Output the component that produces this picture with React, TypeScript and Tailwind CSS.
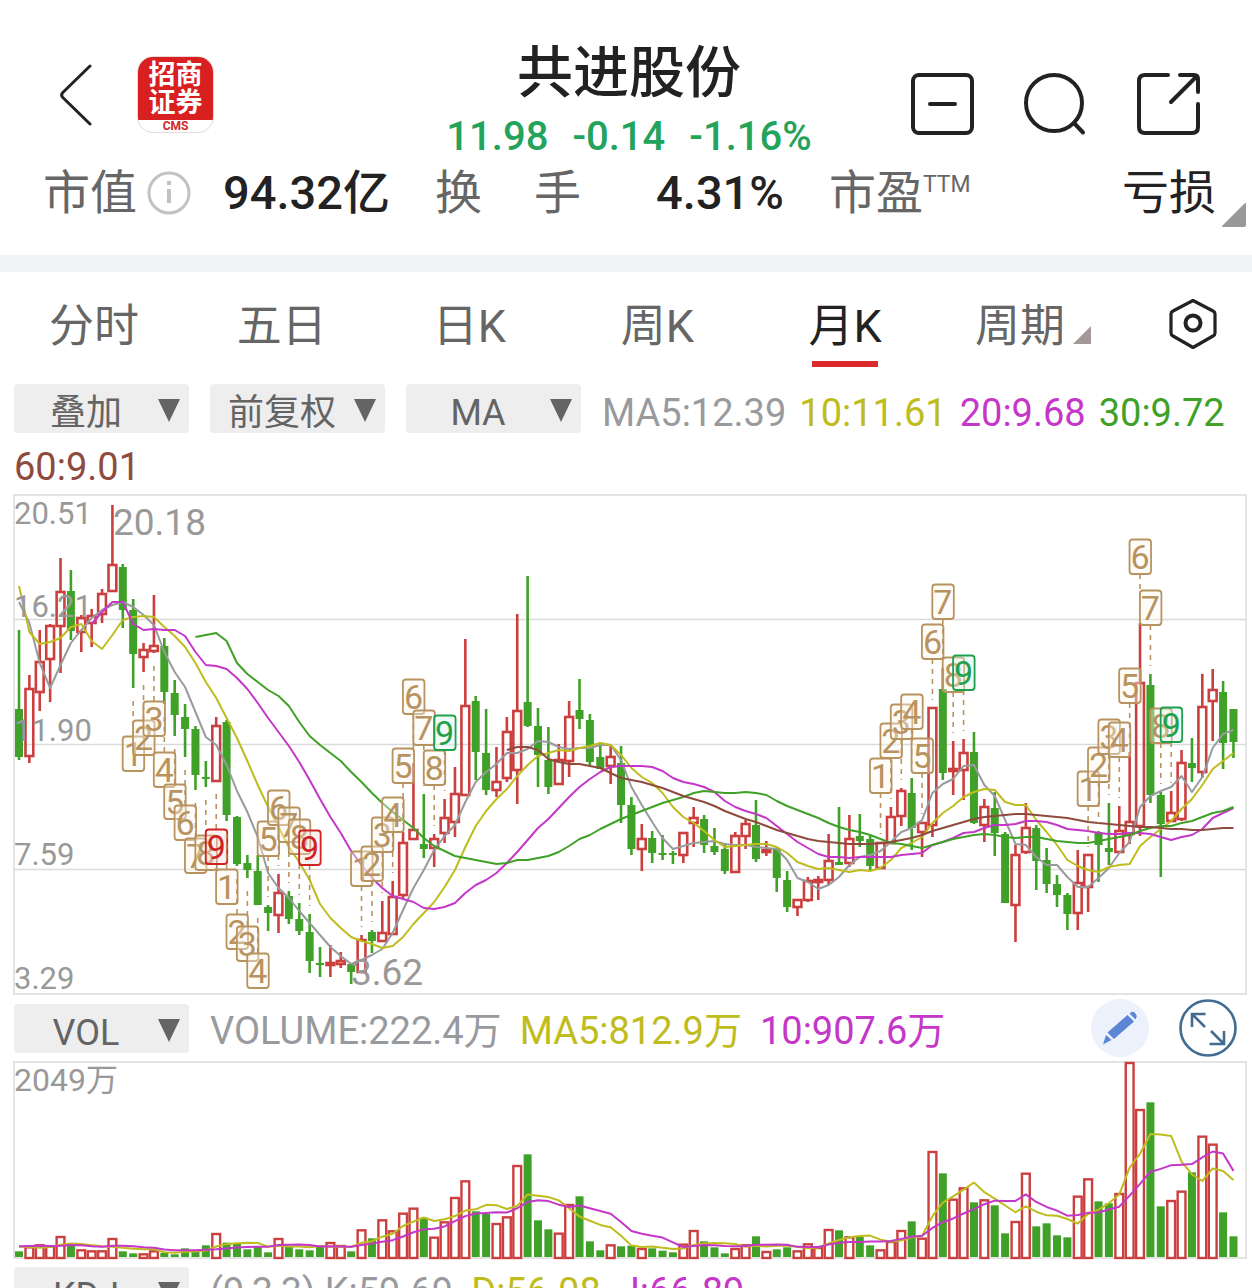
import React from "react";

type Candle = [up: 0 | 1, high: number, low: number, top: number, bottom: number];

const RED = "#cc3f3f";
const GREEN = "#3fa127";
const GRAY = "#999a9e";
const YELLOW = "#bfbc1e";
const MAGENTA = "#c437c9";
const BROWN = "#8f4a3e";
const TAN = "#b8935f";

const FIRST_X = 19;
const STEP = 10.38;
const xAt = (i: number) => FIRST_X + STEP * i;

const candles: Candle[] = [
  [0, 630, 760, 709, 757], [1, 675, 763, 689, 756], [1, 630, 711, 662, 692], [1, 624, 702, 626, 659],
  [1, 558, 673, 592, 626], [0, 570, 640, 591, 631], [1, 615, 652, 618, 632], [1, 609, 647, 616, 623],
  [1, 589, 623, 594, 614], [1, 505, 592, 565, 591], [0, 564, 628, 567, 610], [0, 599, 688, 610, 654],
  [1, 643, 672, 650, 657], [1, 595, 653, 646, 651], [0, 638, 704, 646, 692], [0, 680, 736, 693, 715],
  [0, 704, 757, 717, 729], [0, 726, 790, 729, 775], [0, 761, 787, 777, 779], [1, 717, 781, 726, 781],
  [0, 720, 821, 722, 815], [0, 816, 866, 817, 864], [0, 855, 878, 863, 870], [0, 855, 905, 871, 905],
  [0, 905, 931, 907, 913], [1, 874, 933, 893, 915], [0, 891, 924, 896, 919], [0, 903, 935, 919, 931],
  [0, 914, 973, 932, 961], [0, 947, 977, 963, 965], [1, 945, 977, 963, 965], [1, 952, 968, 961, 964],
  [0, 963, 984, 964, 972], [1, 935, 973, 940, 972], [0, 930, 953, 932, 941], [1, 901, 941, 933, 941],
  [1, 881, 934, 897, 934], [1, 832, 898, 843, 895], [1, 763, 839, 830, 839], [0, 794, 858, 844, 849],
  [1, 834, 867, 839, 848], [1, 799, 843, 818, 833], [1, 767, 837, 794, 822], [1, 639, 795, 706, 795],
  [0, 696, 780, 701, 752], [0, 709, 795, 753, 790], [1, 747, 797, 782, 790], [1, 717, 782, 732, 778],
  [1, 614, 804, 711, 770], [0, 576, 727, 702, 726], [0, 708, 787, 726, 755], [0, 727, 794, 760, 787],
  [1, 744, 784, 760, 784], [1, 701, 777, 717, 761], [0, 679, 729, 710, 719], [0, 714, 765, 720, 762],
  [0, 742, 769, 757, 769], [1, 745, 784, 757, 766], [0, 746, 823, 763, 805], [0, 797, 855, 805, 849],
  [1, 824, 871, 839, 849], [0, 831, 863, 838, 853], [0, 835, 860, 853, 854], [0, 851, 864, 853, 855],
  [1, 832, 863, 833, 855], [1, 807, 847, 818, 823], [0, 815, 853, 819, 845], [0, 828, 855, 846, 852],
  [0, 843, 874, 849, 871], [1, 832, 872, 836, 872], [1, 820, 849, 824, 836], [0, 800, 862, 825, 859],
  [1, 841, 856, 850, 851], [0, 847, 892, 849, 878], [0, 871, 912, 880, 907], [1, 900, 916, 900, 907],
  [1, 877, 902, 881, 900], [1, 876, 900, 880, 882], [1, 834, 885, 861, 880], [0, 807, 865, 862, 865],
  [1, 815, 867, 839, 863], [0, 814, 847, 836, 841], [0, 836, 871, 839, 866], [1, 842, 868, 843, 868],
  [1, 807, 843, 817, 843], [1, 788, 826, 791, 816], [0, 778, 850, 793, 828], [1, 822, 857, 823, 832],
  [1, 708, 837, 708, 825], [0, 668, 780, 689, 773], [1, 741, 795, 769, 771], [1, 739, 800, 753, 770],
  [0, 732, 824, 752, 823], [1, 799, 842, 807, 825], [0, 792, 856, 808, 833], [0, 832, 903, 834, 903],
  [1, 845, 942, 855, 905], [1, 803, 854, 828, 852], [0, 825, 890, 828, 861], [0, 848, 893, 860, 884],
  [0, 875, 907, 884, 895], [0, 893, 930, 895, 914], [1, 850, 930, 883, 913], [1, 855, 912, 855, 887],
  [0, 831, 882, 832, 845], [0, 803, 865, 848, 852], [1, 806, 852, 831, 852], [1, 752, 844, 822, 834],
  [1, 623, 836, 683, 826], [0, 674, 803, 685, 795], [0, 792, 877, 795, 824], [1, 791, 822, 813, 821],
  [1, 750, 821, 763, 819], [0, 738, 782, 763, 768], [1, 674, 778, 707, 772], [1, 669, 741, 690, 701],
  [0, 681, 769, 692, 743], [0, 709, 758, 709, 742],
];

const averages: { color: string; start: number; points: number[] }[] = [
  {
    color: GRAY,
    start: 0,
    points: [
      602, 623, 663, 688, 665, 643, 630, 618, 610, 605, 602, 607, 615, 625, 652, 672, 687, 712, 737, 745, 765, 791,
      812, 837, 873, 888, 898, 911, 923, 935, 947, 956, 964, 960, 955, 949, 933, 910, 888, 870, 850, 836, 825, 802,
      782, 772, 764, 753, 753, 749, 741, 742, 747, 749, 748, 748, 745, 745, 760, 787, 805, 822, 838, 849, 846, 843,
      842, 841, 844, 845, 845, 847, 848, 849, 860, 878, 882, 889, 885, 877, 865, 857, 855, 851, 842, 832, 828, 820,
      793, 784, 779, 766, 765, 785, 796, 820, 844, 845, 857, 865, 865, 877, 887, 887, 878, 868, 853, 842, 807, 796,
      791, 787, 776, 792, 777, 748, 734, 730,
    ],
  },
  {
    color: YELLOW,
    start: 0,
    points: [
      586, 632, 644, 642, 638, 627, 624, 641, 649, 635, 620, 617, 616, 617, 627, 636, 647, 663, 682, 698, 718, 738,
      761, 785, 807, 827, 847, 862, 880, 904, 918, 928, 937, 941, 944, 948, 946, 937, 924, 913, 902, 887, 870, 847,
      826, 811, 799, 789, 776, 765, 756, 753, 750, 751, 748, 746, 743, 745, 755, 768, 777, 783, 793, 807, 817, 823,
      831, 840, 847, 846, 845, 844, 844, 847, 853, 862, 866, 869, 868, 870, 872, 870, 871, 868, 860, 848, 843, 837,
      823, 813, 806, 797, 792, 789, 790, 802, 805, 805, 820, 832, 845, 860, 866, 870, 872, 867, 865, 864, 846, 837,
      829, 821, 809, 799, 785, 769, 761, 753,
    ],
  },
  {
    color: MAGENTA,
    start: 7,
    points: [
      624, 612, 602, 602, 624, 630, 629, 630, 630, 636, 652, 665, 666, 669, 678, 689, 703, 718, 732, 746, 762, 780,
      799, 817, 833, 851, 865, 878, 888, 896, 899, 902, 908, 909, 907, 903, 893, 885, 880, 873, 863, 852, 840, 828,
      819, 808, 797, 787, 779, 772, 767, 766, 766, 766, 767, 771, 778, 782, 784, 787, 792, 801, 807, 811, 814, 818,
      826, 834, 842, 848, 854, 857, 857, 858, 857, 857, 857, 857, 855, 854, 853, 845, 842, 838, 833, 832, 828, 825,
      825, 824, 821, 821, 822, 825, 829, 830, 831, 833, 834, 834, 833, 833, 834, 837, 840, 837, 835, 829, 818, 813,
      808,
    ],
  },
  {
    color: GREEN,
    start: 17,
    points: [
      637, 635, 633, 641, 663, 674, 682, 690, 696, 706, 722, 736, 745, 753, 761, 772, 782, 793, 803, 812, 820, 828,
      838, 846, 851, 856, 858, 860, 862, 864, 863, 860, 860, 858, 856, 852, 846, 839, 835, 829, 824, 819, 815, 811,
      807, 803, 800, 797, 793, 791, 792, 793, 793, 792, 793, 795, 801, 806, 810, 814, 818, 823, 827, 830, 832, 835,
      839, 843, 844, 846, 848, 845, 842, 839, 837, 835, 834, 835, 837, 838, 837, 837, 839, 841, 842, 843, 843, 841,
      839, 837, 835, 831, 828, 826, 826, 823, 821, 817, 813, 811, 807,
    ],
  },
  {
    color: BROWN,
    start: 47,
    points: [
      750, 747, 747, 750, 759, 762, 764, 764, 766, 768, 773, 778, 780, 782, 785, 788, 792, 796, 799, 802, 806, 811,
      815, 819, 822, 826, 830, 833, 836, 839, 841, 842, 843, 844, 844, 844, 843, 842, 840, 838, 835, 831, 828, 825,
      822, 819, 817, 816, 815, 814, 814, 815, 816, 817, 818, 820, 822, 823, 824, 825, 826, 827, 827, 828, 829, 829,
      830, 830, 829, 828, 828,
    ],
  },
];

type Run = { first: number; from: number; to: number; below?: boolean; nine?: "red" | "green" };

const runs: Run[] = [
  { first: 11, from: 1, to: 9, below: true, nine: "red" },
  { first: 20, from: 1, to: 4, below: true },
  { first: 24, from: 5, to: 9, nine: "red" },
  { first: 33, from: 1, to: 9, nine: "green" },
  { first: 83, from: 1, to: 9, nine: "green" },
  { first: 103, from: 1, to: 9, nine: "green" },
];

const badges = runs.flatMap((run) =>
  Array.from({ length: run.to - run.from + 1 }, (_, k) => {
    const index = run.first + k;
    const value = run.from + k;
    const [, high, low] = candles[index];
    const color = value === 9 ? (run.nine === "red" ? "#cf2222" : "#1fa04c") : TAN;
    const fill = value === 9 ? (run.nine === "red" ? "#f8dcdc" : "#dcf3e4") : "#fdf8f0";
    return { x: xAt(index), top: run.below ? low + 48 : high - 84, below: !!run.below, value, color, fill };
  }),
);

const volumeLevels = [
  783, 768, 762, 765, 737, 765, 777, 780, 780, 743, 783, 789, 789, 780, 788, 792, 774, 783, 765, 728, 757, 759, 777,
  768, 786, 743, 768, 777, 780, 768, 755, 764, 783, 717, 744, 687, 720, 667, 652, 682, 739, 693, 620, 570, 663, 671,
  698, 678, 524, 492, 690, 717, 727, 641, 618, 753, 780, 762, 768, 766, 773, 774, 781, 786, 760, 719, 753, 771, 789,
  773, 762, 738, 782, 777, 771, 780, 759, 770, 716, 720, 738, 740, 765, 777, 752, 719, 693, 742, 482, 549, 625, 591,
  636, 627, 645, 729, 692, 547, 708, 699, 735, 741, 616, 564, 633, 639, 608, 215, 356, 336, 648, 629, 601, 546, 436,
  460, 666, 738,
];
const volumeY = (level: number) => (level - 215) / 3;

function volumeAverage(span: number, lead: number[]) {
  return volumeLevels.map((_, i) =>
    i < span - 1 ? lead[i] : volumeLevels.slice(i - span + 1, i + 1).reduce((a, b) => a + b, 0) / span,
  );
}

const volumeLines = [
  { color: YELLOW, points: volumeAverage(5, [769, 770, 772, 770]) },
  { color: MAGENTA, points: volumeAverage(10, [768, 767, 766, 767, 766, 764, 765, 768, 769]) },
];

const FONT = "[font-family:Roboto,'Noto_Sans_CJK_SC',sans-serif]";

function PriceChart() {
  const labels: [string, number][] = [
    ["20.51", 524],
    ["16.21", 617],
    ["11.90", 741],
    ["7.59", 865],
    ["3.29", 989],
  ];
  return (
    <svg viewBox="14 494 1233 501" className="block w-full overflow-visible" role="img" aria-label="月K线图">
      <rect x="14" y="495" width="1232" height="499" fill="none" stroke="#e4e4e4" strokeWidth="2" />
      {[619.5, 744.5, 869.5].map((y) => (
        <line key={y} x1="14" x2="1246" y1={y} y2={y} stroke="#dadada" strokeWidth="1.4" />
      ))}
      {candles.map(([up, high, low, top, bottom], i) => {
        const x = xAt(i);
        const color = up ? RED : GREEN;
        const height = Math.max(bottom - top, 2);
        return (
          <g key={i} stroke={color} strokeWidth="2.6">
            <line x1={x} x2={x} y1={high} y2={up ? top : low} />
            {up ? <line x1={x} x2={x} y1={bottom} y2={low} /> : null}
            {up ? (
              <rect x={x - 3.9} y={top} width="7.8" height={height} fill="none" />
            ) : (
              <rect x={x - 4} y={top} width="8" height={height} fill={color} stroke="none" />
            )}
          </g>
        );
      })}
      {averages.map(({ color, start, points }) => (
        <polyline
          key={color}
          fill="none"
          stroke={color}
          strokeWidth="2"
          strokeLinejoin="round"
          points={points.map((y, k) => `${xAt(start + k)},${y}`).join(" ")}
        />
      ))}
      {badges.map(({ x, top, below, color, value, fill }) => (
        <g key={x}>
          <line
            x1={x}
            x2={x}
            y1={below ? top : top + 35}
            y2={below ? top - 40 : top + 76}
            stroke={TAN}
            strokeWidth="1.6"
            strokeDasharray="5 5"
          />
          <rect x={x - 10.5} y={top + 0.5} width="21.5" height="34.5" rx="3" fill={fill} fillOpacity="0.4" stroke={color} strokeWidth="1.8" />
          <text x={x} y={top + 30} textAnchor="middle" fontSize="34" fill={color}>
            {value}
          </text>
        </g>
      ))}
      <g fill="#999999">
        {labels.map(([label, y]) => (
          <text key={label} x="14" y={y} fontSize="31">
            {label}
          </text>
        ))}
        <text x="113" y="535" fontSize="37">
          20.18
        </text>
        <text x="351" y="985" fontSize="37">
          3.62
        </text>
      </g>
    </svg>
  );
}

function VolumeChart() {
  return (
    <svg viewBox="14 -1 1233 198" className="block w-full overflow-visible" role="img" aria-label="成交量图">
      <rect x="14" y="0" width="1232" height="196" fill="none" stroke="#e4e4e4" strokeWidth="2" />
      <text x="14" y="29" fontSize="32" fill="#999999">
        2049万
      </text>
      {volumeLevels.map((level, i) => {
        const x = xAt(i);
        const y = volumeY(level);
        return candles[i][0] ? (
          <rect key={i} x={x - 3.9} y={y + 1} width="7.8" height={195 - y} fill="#ffffff" stroke={RED} strokeWidth="2.4" />
        ) : (
          <rect key={i} x={x - 4} y={y} width="8" height={195 - y} fill={GREEN} />
        );
      })}
      {volumeLines.map(({ color, points }) => (
        <polyline
          key={color}
          fill="none"
          stroke={color}
          strokeWidth="2"
          strokeLinejoin="round"
          points={points.map((v, i) => `${xAt(i)},${volumeY(v)}`).join(" ")}
        />
      ))}
    </svg>
  );
}

function Picker({ label, options }: { label: string; options: string[] }) {
  return (
    <div className="relative mr-2 h-[49px] w-[175px] shrink-0">
      <select
        aria-label={label}
        className="h-full w-full appearance-none rounded bg-[#eeeeee] pt-[9px] pr-[31px] text-center text-[36px] leading-[40px] text-[#646464]"
      >
        {options.map((option) => (
          <option key={option}>{option}</option>
        ))}
      </select>
      <svg viewBox="0 0 22 23" className="pointer-events-none absolute top-[15px] right-[9px] h-[23px] w-[22px]" aria-hidden="true">
        <path d="M0 0h22L11 23z" fill="#646464" />
      </svg>
    </div>
  );
}

function Header() {
  return (
    <header className="grid grid-cols-[1fr_auto_1fr] pt-[41px] pl-[6px]">
      <div className="flex items-start gap-[43px] pt-[15px] pl-[54px]">
        <button type="button" aria-label="返回" className="pt-[7px]">
          <svg viewBox="0 0 34 64" className="h-16 w-[34px]" fill="none" stroke="#222222" strokeWidth="3" strokeLinecap="round" strokeLinejoin="round">
            <path d="M30 3 2.800 29.500Q0.500 32 2.800 34.500L30 61" />
          </svg>
        </button>
        <div className="flex h-[77px] w-[77px] flex-col overflow-hidden rounded-[16px] border border-[#e3dada] bg-white">
          <div className="flex h-[63px] flex-col items-center justify-center bg-[#d82021] text-[27px] leading-[28px] font-bold text-white">
            <span>招商</span>
            <span>证券</span>
          </div>
          <span className="text-center text-[12px] leading-[12px] font-bold text-[#d02a2a]">CMS</span>
        </div>
      </div>
      <div className="flex flex-col items-center gap-2">
        <h1 className="text-[56px] leading-[64px] font-medium text-[#222222]">共进股份</h1>
        <p className="flex gap-6 text-[40px] leading-[48px] font-medium text-[#24a35c]">
          <span>11.98</span>
          <span>-0.14</span>
          <span>-1.16%</span>
        </p>
      </div>
      <div className="flex items-start justify-end gap-[49px] pt-[31px] pr-[52px]">
        <button type="button" aria-label="移除自选">
          <svg viewBox="0 0 64 64" className="h-16 w-16" fill="none" stroke="#222222" strokeWidth="4" strokeLinecap="round">
            <rect x="3" y="3" width="59" height="58" rx="6" />
            <path d="M20 32h25" />
          </svg>
        </button>
        <button type="button" aria-label="搜索">
          <svg viewBox="0 0 64 64" className="h-16 w-16" fill="none" stroke="#222222" strokeWidth="4" strokeLinecap="round">
            <circle cx="31" cy="31" r="28" />
            <path d="m51 51 9 9.500" />
          </svg>
        </button>
        <button type="button" aria-label="分享">
          <svg viewBox="0 0 64 64" className="h-16 w-16" fill="none" stroke="#222222" strokeWidth="4" strokeLinecap="round" strokeLinejoin="round">
            <path d="M32 3H9Q3 3 3 9v46q0 6 6 6h47q6 0 6-6V32M44 3h14q4 0 4 4v13M60 5 35 30" />
          </svg>
        </button>
      </div>
    </header>
  );
}

function Stats() {
  return (
    <section className="relative grid grid-cols-[346fr_348fr_386fr] gap-x-[45px] pt-[8px] pr-[36px] pb-[38px] pl-[43px] text-[47px] leading-[48px] text-[#666666]">
      <div className="flex items-center justify-between">
        <span className="flex items-center gap-[10px]">
          市值
          <svg viewBox="0 0 44 44" className="h-11 w-11" fill="none" stroke="#c2c2c2" strokeWidth="3" aria-hidden="true">
            <circle cx="22" cy="22" r="20" />
            <path d="M22 18v14M22 10v4" strokeWidth="4" />
          </svg>
        </span>
        <span className="font-medium text-[#222222]">94.32亿</span>
      </div>
      <div className="flex items-center justify-between">
        <span className="flex gap-[52px]">
          <span>换</span>
          <span>手</span>
        </span>
        <span className="font-medium text-[#222222]">4.31%</span>
      </div>
      <div className="flex items-center justify-between">
        <span className="flex items-start">
          市盈<span className="text-[23px] leading-[32px]">TTM</span>
        </span>
        <span className="text-[#222222]">亏损</span>
      </div>
      <button type="button" aria-label="展开更多" className="absolute right-[6px] bottom-7">
        <svg viewBox="0 0 24 24" className="h-6 w-6">
          <path d="M24 1v21q0 2-2 2H1q-2 0 0-2L22 1q2-2 2 0z" fill="#999999" />
        </svg>
      </button>
    </section>
  );
}

function Tabs() {
  const names = ["分时", "五日", "日K", "周K", "月K"];
  const base = "flex flex-col items-center pt-[2px] text-[45px] leading-[54px]";
  return (
    <nav className="grid grid-cols-[repeat(6,3fr)_2fr] items-start pt-[26px] pb-[17px]">
      {names.map((name) => (
        <button key={name} type="button" className={name === "月K" ? `${base} text-[#222222]` : `${base} text-[#666666]`}>
          {name}
          {name === "月K" ? <span className="mt-[7px] h-[6px] w-[66px] bg-[#dc2a2c]" /> : null}
        </button>
      ))}
      <button type="button" className="flex items-end justify-center gap-2 pt-[2px] text-[45px] leading-[54px] text-[#666666]">
        周期
        <svg viewBox="0 0 18 18" className="mb-[10px] h-[18px] w-[18px]" aria-hidden="true">
          <path d="M18 0v18H0z" fill="#a39797" />
        </svg>
      </button>
      <button type="button" aria-label="设置" className="flex justify-center pl-2">
        <svg viewBox="0 0 48 52" className="h-[52px] w-12" fill="none" stroke="#222222" strokeWidth="3.200" strokeLinejoin="round">
          <path d="M24 2.500 44 13q2 1 2 3v19q0 2-2 3L24 49.500 4 38q-2-1-2-3V16q0-2 2-3z" />
          <circle cx="24" cy="25" r="7.500" strokeWidth="4" />
        </svg>
      </button>
    </nav>
  );
}

export default function App() {
  return (
    <main className={`${FONT} h-screen overflow-hidden bg-white`}>
      <Header />
      <Stats />
      <div className="h-[17px] bg-[#f2f4f7]" />
      <Tabs />
      <section className="pr-[5px] pl-[14px]">
        <div className="flex flex-wrap gap-x-[13px] pb-[2px] text-[38px] leading-[50px]">
          <Picker label="叠加" options={["叠加"]} />
          <Picker label="复权方式" options={["前复权", "后复权", "不复权"]} />
          <Picker label="主图指标" options={["MA", "BOLL"]} />
          <span className="pt-1 text-[#999a9e]">MA5:12.39</span>
          <span className="pt-1 text-[#bfbc1e]">10:11.61</span>
          <span className="pt-1 text-[#c437c9]">20:9.68</span>
          <span className="pt-1 text-[#3fa127]">30:9.72</span>
          <span className="pt-1 text-[#8f4a3e]">60:9.01</span>
        </div>
        <PriceChart />
        <div className="flex items-center gap-x-[13px] text-[38px] leading-[50px]">
          <Picker label="副图指标一" options={["VOL", "MACD"]} />
          <div className="flex gap-[18px] pt-[6px]">
            <span className="text-[#999a9e]">VOLUME:222.4万</span>
            <span className="text-[#bfbc1e]">MA5:812.9万</span>
            <span className="text-[#c437c9]">10:907.6万</span>
          </div>
          <div className="ml-auto flex gap-[30px] py-1 pr-[10px]">
            <button type="button" aria-label="画线">
              <svg viewBox="0 0 58 58" className="h-[58px] w-[58px]">
                <circle cx="29" cy="29" r="29" fill="#ecf1fb" />
                <path d="m12 45.500 3-9.500L20.500 41zM16.500 33.500 36.500 16l6.500 6.500-20 17.500zM38.500 14.500l2-1.500q2-1 3.500 1l1 1.500q1.500 2 0 3.500L44.500 20.500z" fill="#5b86d6" />
              </svg>
            </button>
            <button type="button" aria-label="全屏">
              <svg viewBox="0 0 58 58" className="h-[58px] w-[58px]" fill="none" stroke="#426b90" strokeWidth="2.600">
                <circle cx="29" cy="29" r="27.500" />
                <path d="M26.500 15H13v13M13.500 15.500 26 28M45 32v13H30.500M44.500 44.500 32 32" />
              </svg>
            </button>
          </div>
        </div>
        <VolumeChart />
        <div className="flex items-start gap-x-[13px] pt-2 text-[38px] leading-[50px]">
          <Picker label="副图指标二" options={["KDJ", "RSI"]} />
          <div className="flex gap-[18px]">
            <span className="text-[#999a9e]">(9,3,3) K:59.69</span>
            <span className="text-[#bfbc1e]">D:56.08</span>
            <span className="text-[#c437c9]">J:66.89</span>
          </div>
        </div>
      </section>
    </main>
  );
}
